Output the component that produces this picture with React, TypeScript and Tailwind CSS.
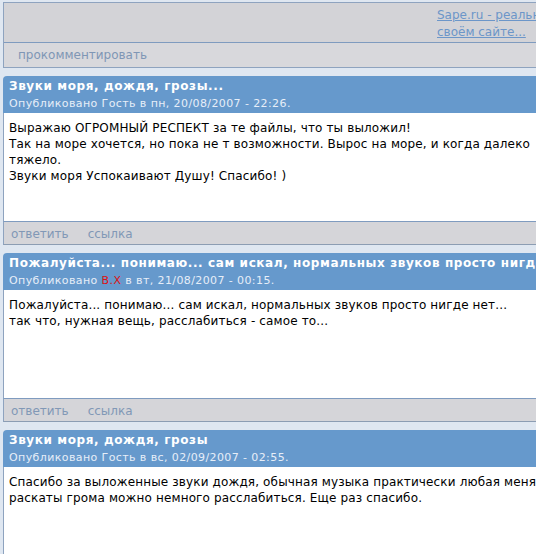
import React from "react";

type Comment = {
  title: string;
  author: string;
  authorRed?: boolean;
  date: string;
  lines: string[];
};

const comments: Comment[] = [
  {
    title: "Звуки моря, дождя, грозы...",
    author: "Гость",
    date: "пн, 20/08/2007 - 22:26.",
    lines: [
      "Выражаю ОГРОМНЫЙ РЕСПЕКТ за те файлы, что ты выложил!",
      "Так на море хочется, но пока не т возможности. Вырос на море, и когда далеко",
      "тяжело.",
      "Звуки моря Успокаивают Душу! Спасибо! )",
    ],
  },
  {
    title: "Пожалуйста... понимаю... сам искал, нормальных звуков просто нигде нет...",
    author: "В.Х",
    authorRed: true,
    date: "вт, 21/08/2007 - 00:15.",
    lines: [
      "Пожалуйста... понимаю... сам искал, нормальных звуков просто нигде нет...",
      "так что, нужная вещь, расслабиться - самое то...",
    ],
  },
  {
    title: "Звуки моря, дождя, грозы",
    author: "Гость",
    date: "вс, 02/09/2007 - 02:55.",
    lines: [
      "Спасибо за выложенные звуки дождя, обычная музыка практически любая меня",
      "раскаты грома можно немного расслабиться. Еще раз спасибо.",
    ],
  },
];

function CommentCard({ c }: { c: Comment }) {
  return (
    <div className="flex flex-col w-[620px] shrink-0">
      {/* header */}
      <div className="h-[37px] bg-[#6699cc] rounded-tl-[4px] pt-[2px] pl-[6px] whitespace-nowrap overflow-hidden">
        <div className="text-[12px] leading-[17px] font-bold tracking-[0.6px] text-white">{c.title}</div>
        <div className="text-[11px] leading-[17px] tracking-[0.4px] text-[#e6eef8]">
          Опубликовано{" "}
          <span className={c.authorRed ? "text-[#dd1111]" : ""}>{c.author}</span> в{" "}
          {c.date}
        </div>
      </div>
      {/* body */}
      <div className="h-[108px] bg-white border-l border-[#8ea3bf] pl-[5px] pt-[7px] text-[12px] leading-[16px] tracking-[0.14px] text-black whitespace-nowrap">
        {c.lines.map((l, i) => (
          <div key={i}>{l}</div>
        ))}
      </div>
      {/* links */}
      <div className="h-[24px] bg-[#d5d5d9] border-t border-[#7f9bbf] border-b border-b-[#8c9db3] border-l border-l-[#8ea3bf] pl-[7px] pt-[1px] flex items-center gap-[19px] text-[12px] text-[#8198b6]">
        <span>ответить</span>
        <span>ссылка</span>
      </div>
    </div>
  );
}

export default function App() {
  return (
    <div className="w-[536px] h-[554px] overflow-hidden bg-[#dfe7f1] font-['DejaVu_Sans',Verdana,sans-serif]">
      <div className="pl-[3px] pt-[2px] flex flex-col gap-[8px]">
        {/* previous node bottom */}
        <div className="w-[620px] shrink-0 flex flex-col border-t border-l border-b border-[#8ea3bf]">
          <div className="h-[39px] bg-[#d3d3d7] border-b border-[#7f9bbf] box-content flex">
            <div className="ml-[433px] pt-[4px] text-[12px] leading-[17px] text-[#6c96c9] underline whitespace-nowrap">
              <div>Sape.ru - реальный заработок на</div>
              <div>своём сайте...</div>
            </div>
          </div>
          <div className="h-[24px] bg-[#d8d8dc] pl-[14px] flex items-center text-[12px] text-[#7f96b5]">
            прокомментировать
          </div>
        </div>
        {comments.map((c, i) => (
          <CommentCard key={i} c={c} />
        ))}
      </div>
    </div>
  );
}
